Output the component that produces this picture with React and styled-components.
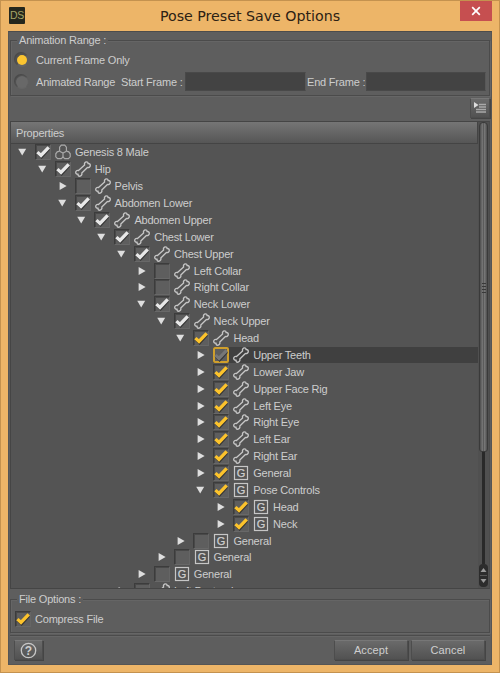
import React from "react";
import styled, { createGlobalStyle, css } from "styled-components";

const GlobalStyle = createGlobalStyle`
  * { box-sizing: border-box; }
  body { margin: 0; overflow: hidden; }
`;

const Window = styled.div`
  width: 500px;
  height: 673px;
  display: flex;
  flex-direction: column;
  padding: 0 7px 7px;
  background: #edb568;
  border: 1px solid #c4924f;
  font-family: "Liberation Sans", Arial, sans-serif;
  font-size: 11px;
  letter-spacing: -0.2px;
  color: #cdcdcd;
`;

const TitleBar = styled.header`
  height: 30px;
  flex: none;
  display: grid;
  grid-template-columns: 34px 1fr 34px;
  align-items: start;
`;

const AppIcon = styled.svg`
  display: block;
  margin: 6px 0 0 1px;
`;

const Title = styled.h1`
  margin: 0;
  padding-top: 1px;
  text-align: center;
  font: 400 14.2px/28px "DejaVu Sans", Verdana, sans-serif;
  letter-spacing: 0;
  color: #2c2114;
  white-space: nowrap;
`;

const CloseButton = styled.button`
  width: 32px;
  height: 20px;
  margin-left: 2px;
  padding: 0;
  border: 0;
  display: flex;
  align-items: center;
  justify-content: center;
  background: #c64f50;
`;

const Dialog = styled.main`
  flex: 1;
  min-height: 0;
  display: flex;
  flex-direction: column;
  padding: 8px 1px 0;
  background: #5e5e5e;
  border: 1px solid #555;
  border-top: 1px solid #4c4c4c;
`;

const Group = styled.section`
  flex: none;
  height: ${(p) => p.$height}px;
  border: 1px solid #4b4b4b;
  box-shadow: 1px 1px 0 #666, inset 1px 1px 0 #656565;
  display: flex;
  flex-direction: column;
`;

const Legend = styled.div`
  align-self: flex-start;
  margin: -8px 0 0 6px;
  padding: 0 2px;
  height: 15px;
  line-height: 15px;
  background: #5e5e5e;
`;

const OptionRow = styled.label`
  display: flex;
  align-items: center;
  height: ${(p) => p.$height}px;
  padding-left: 4px;
`;

const Radio = styled.span`
  flex: none;
  width: 14px;
  height: 14px;
  margin-right: 7px;
  border-radius: 50%;
  border: ${(p) => (p.$on ? "2px" : "1px")} solid #515151;
  border-bottom-color: #656565;
  border-right-color: #5f5f5f;
  background: ${(p) => (p.$on ? "#fbc531" : "#686868")};
  box-shadow: -1px -1px 0 #4a4a4a;
`;

const FieldLabel = styled.span`
  width: ${(p) => p.$width}px;
  margin-left: ${(p) => p.$gap}px;
  flex: none;
  white-space: nowrap;
`;

const Field = styled.span`
  flex: none;
  width: ${(p) => p.$width}px;
  height: 19px;
  background: #434343;
  border: 1px solid #494949;
  border-right-color: #585858;
`;

const Caption = styled.span`
  flex: none;
  width: ${(p) => (p.$width ? p.$width + "px" : "auto")};
  white-space: nowrap;
`;

const Toolbar = styled.div`
  flex: none;
  height: 25px;
  display: flex;
  justify-content: flex-end;
  padding-top: 2px;
`;

const raised = css`
  background: linear-gradient(#6a6a6a, #525252);
  border: 1px solid #4d4d4d;
  border-top-color: #777;
  box-shadow: 1px 1px 0 #454545;
`;

const MenuButton = styled.button`
  ${raised}
  width: 20px;
  height: 20px;
  padding: 0;
  display: flex;
  align-items: center;
  justify-content: center;
`;

const TreePanel = styled.section`
  flex: none;
  height: 468px;
  display: flex;
  background: #545454;
  border: 1px solid #454545;
  border-right-color: #4b4b4b;
`;

const TreeArea = styled.div`
  flex: 1;
  min-width: 0;
  display: flex;
  flex-direction: column;
  overflow: hidden;
`;

const TreeHeader = styled.div`
  flex: none;
  height: 22px;
  padding-left: 5px;
  line-height: 22px;
  background: linear-gradient(#757575, #565656);
  border-bottom: 1px solid #444;
  border-right: 1px solid #444;
`;

const TreeBody = styled.div`
  flex: 1;
  overflow: hidden;
`;

const TreeRow = styled.div`
  height: 16.88px;
  margin-left: ${(p) => p.$level * 19.8}px;
  padding-left: 4px;
  display: flex;
  align-items: center;
  white-space: nowrap;
`;

const RowContent = styled.span`
  flex: 1;
  height: 100%;
  display: flex;
  align-items: center;
  background: ${(p) => (p.$on ? "#404040" : "transparent")};
`;

const Arrow = styled.svg`
  flex: none;
  margin-right: 4px;
`;

const Box = styled.span`
  flex: none;
  width: 16px;
  height: 16px;
  display: flex;
  align-items: center;
  justify-content: center;
  background: #5e5e5e;
  border: 1px solid;
  border-color: #3c3c3c #656565 #686868 #3c3c3c;
  box-shadow: inset 1px 1px 0 #494949;
  ${(p) =>
    p.$focus &&
    css`
      border: 2px solid #cf9f2c;
      border-radius: 2px;
      box-shadow: none;
    `}
`;

const CheckMark = styled.svg`
  flex: none;
`;

const NodeIcon = styled.svg`
  flex: none;
  margin: 0 4px 0 4px;
`;

const ScrollTrack = styled.div`
  flex: none;
  width: 11px;
  display: flex;
  flex-direction: column;
  align-items: center;
  background: #505050;
`;

const Thumb = styled.div`
  width: 9px;
  height: 330px;
  flex: none;
  border-radius: 4px 4px 3px 3px;
  border: 1px solid #3a3a3a;
  background: linear-gradient(90deg, #4d4d4d, #747474 35%, #5b5b5b 50%, #777 65%, #4d4d4d);
  display: flex;
  flex-direction: column;
  align-items: center;
  padding-top: 160px;
  gap: 2px;
`;

const Grip = styled.i`
  width: 4px;
  height: 1px;
  background: #393939;
`;

const Groove = styled.div`
  flex: 1;
  width: 3px;
  background: #292929;
`;

const Stepper = styled.svg`
  flex: none;
  margin-bottom: 1px;
`;

const FileGroup = styled(Group)`
  margin-top: 10px;
`;

const Footer = styled.footer`
  flex: 1;
  margin: 2px 0 0;
  border-top: 1px solid #4b4b4b;
  box-shadow: inset 0 1px 0 #666;
  display: flex;
  align-items: flex-start;
  gap: 3px;
  padding: 4px 5px 0 4px;
`;

const Button = styled.button`
  ${raised}
  width: ${(p) => p.$width}px;
  height: 20px;
  padding: 0;
  display: flex;
  align-items: center;
  justify-content: center;
  font: inherit;
  letter-spacing: 0.1px;
  color: #cfcfcf;
`;

const Spacer = styled.span`
  flex: 1;
`;

const CHECK_COLORS = { white: "#e8e8e8", gold: "#fcc32c", dim: "#777" };

function CheckBox({ state, focus }) {
  return (
    <Box $focus={focus}>
      {state && (
        <CheckMark width="14" height="14" viewBox="0 0 14 14">
          <path d="M2 8.3 5.6 11.8 12.9 3.7" fill="none" stroke="#353535" strokeWidth="3" />
          <path d="M1.4 7.1 5 10.5 12.7 2.3" fill="none" stroke={CHECK_COLORS[state]} strokeWidth="3.3" />
        </CheckMark>
      )}
    </Box>
  );
}

function Disclosure({ open }) {
  return (
    <Arrow width="16" height="12" viewBox="0 0 16 12">
      <path d={open ? "M3.2 2.8h8l-4 6.6z" : "M4.6 2v8l7-4z"} fill="#dedede" />
    </Arrow>
  );
}

function Glyph({ kind }) {
  if (kind === "figure")
    return (
      <NodeIcon width="16" height="16" viewBox="0 0 16 16" fill="none" stroke="#a9a9a9" strokeWidth="1.2">
        <path d="M4.6 7.2V3.2L6.3 1.2h3.4l1.7 2v4" />
        <path d="M4.6 7.2 8 9l3.4-1.8M8 9v4" />
        <path d="M4.600 7.200 2.200 7.800.8 9.800v3l1.800 1.800h3.600L8 13l1.800 1.600h3.600l1.800-1.800v-3l-1.400-2-2.400-.6" />
      </NodeIcon>
    );
  if (kind === "group")
    return (
      <NodeIcon width="16" height="16" viewBox="0 0 16 16" fill="none" stroke="#c6c6c6">
        <rect x="1.5" y="1.5" width="13" height="13" strokeWidth="1.2" />
        <text x="7.9" y="11.9" textAnchor="middle" fontSize="11" fontFamily="Liberation Sans, sans-serif" fill="#cecece" stroke="#cecece" strokeWidth=".25">
          G
        </text>
      </NodeIcon>
    );
  return (
    <NodeIcon width="16" height="16" viewBox="0 0 16 16" fill="none" stroke="#c6c6c6" strokeWidth="1.35" strokeLinejoin="round">
      <path d="M3.500 9.500 9.600 4C9 2.400 10 .8 11.500.8c1.200 0 1.600.9 1.500 1.700 1.200-.2 2.300.5 2.300 1.800 0 1.700-1.400 2.500-2.900 2.200L6.800 11.900c.5 1.700-.5 3.300-2.200 3.300-1.300 0-1.700-1-1.500-2-1.200.2-2.400-.5-2.400-1.700 0-1.600 1.300-2.400 2.800-2Z" />
    </NodeIcon>
  );
}

const NODES = [
  [0, true, "white", "figure", "Genesis 8 Male"],
  [1, true, "white", "bone", "Hip"],
  [2, false, null, "bone", "Pelvis"],
  [2, true, "white", "bone", "Abdomen Lower"],
  [3, true, "white", "bone", "Abdomen Upper"],
  [4, true, "white", "bone", "Chest Lower"],
  [5, true, "white", "bone", "Chest Upper"],
  [6, false, null, "bone", "Left Collar"],
  [6, false, null, "bone", "Right Collar"],
  [6, true, "white", "bone", "Neck Lower"],
  [7, true, "white", "bone", "Neck Upper"],
  [8, true, "gold", "bone", "Head"],
  [9, false, "dim", "bone", "Upper Teeth", true],
  [9, false, "gold", "bone", "Lower Jaw"],
  [9, false, "gold", "bone", "Upper Face Rig"],
  [9, false, "gold", "bone", "Left Eye"],
  [9, false, "gold", "bone", "Right Eye"],
  [9, false, "gold", "bone", "Left Ear"],
  [9, false, "gold", "bone", "Right Ear"],
  [9, false, "gold", "group", "General"],
  [9, true, "gold", "group", "Pose Controls"],
  [10, false, "gold", "group", "Head"],
  [10, false, "gold", "group", "Neck"],
  [8, false, null, "group", "General"],
  [7, false, null, "group", "General"],
  [6, false, null, "group", "General"],
  [5, false, null, "bone", "Left Pectoral"],
];

export default function App() {
  return (
    <>
      <GlobalStyle />
      <Window>
        <TitleBar>
          <AppIcon width="16" height="17" viewBox="0 0 16 17">
            <rect width="16" height="17" rx="1" fill="#25271d" />
            <text x="8" y="12.3" textAnchor="middle" fontSize="10.5" fontFamily="Liberation Sans, sans-serif" fill="#a5a565">
              DS
            </text>
          </AppIcon>
          <Title>Pose Preset Save Options</Title>
          <CloseButton aria-label="Close">
            <svg width="10" height="10" viewBox="0 0 10 10" stroke="#fff" strokeWidth="1.7">
              <path d="M1.2 1.2l7.6 7.6M8.8 1.2 1.2 8.8" />
            </svg>
          </CloseButton>
        </TitleBar>
        <Dialog>
          <Group $height={56}>
            <Legend>Animation Range :</Legend>
            <OptionRow $height={24}>
              <Radio $on />
              <Caption>Current Frame Only</Caption>
            </OptionRow>
            <OptionRow $height={19}>
              <Radio />
              <Caption $width={78}>Animated Range</Caption>
              <FieldLabel $width={64} $gap={7}>Start Frame :</FieldLabel>
              <Field $width={121} />
              <FieldLabel $width={59} $gap={1}>End Frame :</FieldLabel>
              <Field $width={120} />
            </OptionRow>
          </Group>
          <Toolbar>
            <MenuButton aria-label="Options">
              <svg width="14" height="14" viewBox="0 0 14 14">
                <path d="M1 1v6l4.500-3z" fill="#ddd" />
                <path d="M6 3.500h7M6 6h7M3 8.500h10M3 11h10" stroke="#a9a9a9" strokeWidth="1.3" />
              </svg>
            </MenuButton>
          </Toolbar>
          <TreePanel>
            <TreeArea>
              <TreeHeader>Properties</TreeHeader>
              <TreeBody>
                {NODES.map(([level, open, state, kind, name, selected], i) => (
                  <TreeRow key={i} $level={level}>
                    <Disclosure open={open} />
                    <RowContent $on={selected}>
                      <CheckBox state={state} focus={selected} />
                      <Glyph kind={kind} />
                      {name}
                    </RowContent>
                  </TreeRow>
                ))}
              </TreeBody>
            </TreeArea>
            <ScrollTrack>
              <Thumb>
                <Grip />
                <Grip />
                <Grip />
                <Grip />
              </Thumb>
              <Groove />
              <Stepper width="9" height="23" viewBox="0 0 9 23">
                <rect width="9" height="23" rx="4" fill="#2c2c2c" />
                <path d="M1.5 8 4.5 4l3 4zM1.5 15l3 4 3-4z" fill="#9a9a9a" />
                <path d="M1 11.5h7" stroke="#555" />
              </Stepper>
            </ScrollTrack>
          </TreePanel>
          <FileGroup $height={34}>
            <Legend>File Options :</Legend>
            <OptionRow $height={24}>
              <CheckBox state="gold" />
              <FieldLabel $width={80} $gap={4}>Compress File</FieldLabel>
            </OptionRow>
          </FileGroup>
          <Footer>
            <Button $width={29} aria-label="Help">
              <svg width="17" height="17" viewBox="0 0 17 17">
                <circle cx="8.5" cy="8.5" r="7.2" fill="none" stroke="#c8c8c8" strokeWidth="1.3" />
                <text x="8.5" y="12.7" textAnchor="middle" fontSize="12" fontWeight="700" fontFamily="Liberation Sans, sans-serif" fill="#cecece">
                  ?
                </text>
              </svg>
            </Button>
            <Spacer />
            <Button $width={74}>Accept</Button>
            <Button $width={74}>Cancel</Button>
          </Footer>
        </Dialog>
      </Window>
    </>
  );
}
